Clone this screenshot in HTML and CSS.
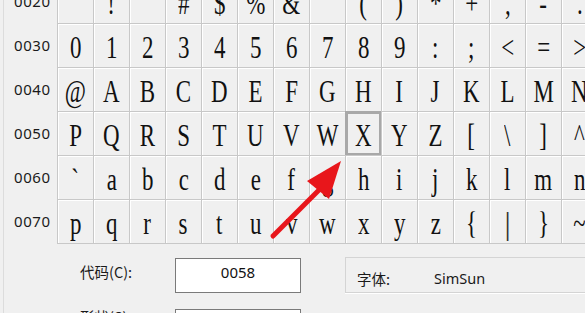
FILE: index.html
```html
<!DOCTYPE html>
<html lang="zh">
<head>
<meta charset="utf-8">
<link rel="stylesheet" href="styles.css">
</head>
<body>
<div class="window">
  <div class="grid">
    <div class="label">0020</div>
    <div class="cell"></div><div class="cell"><span class="g">!</span></div><div class="cell"><span class="g hi">"</span></div><div class="cell"><span class="g">#</span></div><div class="cell"><span class="g">$</span></div><div class="cell"><span class="g">%</span></div><div class="cell"><span class="g">&amp;</span></div><div class="cell"><span class="g hi">'</span></div><div class="cell"><span class="g">(</span></div><div class="cell"><span class="g">)</span></div><div class="cell"><span class="g">*</span></div><div class="cell"><span class="g">+</span></div><div class="cell"><span class="g">,</span></div><div class="cell"><span class="g">-</span></div><div class="cell"><span class="g">.</span></div><div class="cell"><span class="g">/</span></div>
    <div class="label">0030</div>
    <div class="cell"><span class="g">0</span></div><div class="cell"><span class="g">1</span></div><div class="cell"><span class="g">2</span></div><div class="cell"><span class="g">3</span></div><div class="cell"><span class="g">4</span></div><div class="cell"><span class="g">5</span></div><div class="cell"><span class="g">6</span></div><div class="cell"><span class="g">7</span></div><div class="cell"><span class="g">8</span></div><div class="cell"><span class="g">9</span></div><div class="cell"><span class="g">:</span></div><div class="cell"><span class="g">;</span></div><div class="cell"><span class="g">&lt;</span></div><div class="cell"><span class="g">=</span></div><div class="cell"><span class="g">&gt;</span></div><div class="cell"><span class="g">?</span></div>
    <div class="label">0040</div>
    <div class="cell"><span class="g">@</span></div><div class="cell"><span class="g">A</span></div><div class="cell"><span class="g">B</span></div><div class="cell"><span class="g">C</span></div><div class="cell"><span class="g">D</span></div><div class="cell"><span class="g">E</span></div><div class="cell"><span class="g">F</span></div><div class="cell"><span class="g">G</span></div><div class="cell"><span class="g">H</span></div><div class="cell"><span class="g">I</span></div><div class="cell"><span class="g">J</span></div><div class="cell"><span class="g">K</span></div><div class="cell"><span class="g">L</span></div><div class="cell"><span class="g">M</span></div><div class="cell"><span class="g">N</span></div><div class="cell"><span class="g">O</span></div>
    <div class="label">0050</div>
    <div class="cell"><span class="g">P</span></div><div class="cell"><span class="g">Q</span></div><div class="cell"><span class="g">R</span></div><div class="cell"><span class="g">S</span></div><div class="cell"><span class="g">T</span></div><div class="cell"><span class="g">U</span></div><div class="cell"><span class="g">V</span></div><div class="cell"><span class="g">W</span></div><div class="cell selected"><span class="g">X</span></div><div class="cell"><span class="g">Y</span></div><div class="cell"><span class="g">Z</span></div><div class="cell"><span class="g">[</span></div><div class="cell"><span class="g">\</span></div><div class="cell"><span class="g">]</span></div><div class="cell"><span class="g">^</span></div><div class="cell"><span class="g">_</span></div>
    <div class="label">0060</div>
    <div class="cell"><span class="g">`</span></div><div class="cell"><span class="g">a</span></div><div class="cell"><span class="g">b</span></div><div class="cell"><span class="g">c</span></div><div class="cell"><span class="g">d</span></div><div class="cell"><span class="g">e</span></div><div class="cell"><span class="g">f</span></div><div class="cell"><span class="g">g</span></div><div class="cell"><span class="g">h</span></div><div class="cell"><span class="g">i</span></div><div class="cell"><span class="g">j</span></div><div class="cell"><span class="g">k</span></div><div class="cell"><span class="g">l</span></div><div class="cell"><span class="g">m</span></div><div class="cell"><span class="g">n</span></div><div class="cell"><span class="g">o</span></div>
    <div class="label">0070</div>
    <div class="cell"><span class="g">p</span></div><div class="cell"><span class="g">q</span></div><div class="cell"><span class="g">r</span></div><div class="cell"><span class="g">s</span></div><div class="cell"><span class="g">t</span></div><div class="cell"><span class="g">u</span></div><div class="cell"><span class="g">v</span></div><div class="cell"><span class="g">w</span></div><div class="cell"><span class="g">x</span></div><div class="cell"><span class="g">y</span></div><div class="cell"><span class="g">z</span></div><div class="cell"><span class="g">{</span></div><div class="cell"><span class="g bar">|</span></div><div class="cell"><span class="g">}</span></div><div class="cell"><span class="g">~</span></div><div class="cell"></div>
  </div>
  <div class="bottom">
    <div class="fields">
      <div class="field">
        <span class="field-label">代码(C):</span>
        <div class="box">0058</div>
      </div>
      <div class="field">
        <span class="field-label up">形状(S):</span>
        <div class="box"></div>
      </div>
    </div>
    <div class="group">
      <span class="group-label">字体:</span>
      <span class="group-value">SimSun</span>
    </div>
  </div>
  <svg class="arrow" width="585" height="313" viewBox="0 0 585 313">
    <line x1="273" y1="236" x2="320" y2="189" stroke="#e8161b" stroke-width="5" stroke-linecap="round"/>
    <polygon points="341,161 307,181 329,199" fill="#e8161b"/>
  </svg>
</div>
</body>
</html>
```
FILE: styles.css
```css
html, body {
  margin: 0;
  padding: 0;
  background: #f0f0f0;
}
.window {
  position: relative;
  width: 585px;
  height: 313px;
  overflow: hidden;
  background: #f0f0f0;
  border-left: 1px solid #dcdcdc;
  margin-left: 3px;
  box-sizing: border-box;
}
.grid {
  display: grid;
  grid-template-columns: 53px repeat(16, 36px);
  grid-auto-rows: 44px;
  margin-top: -21px;
  width: max-content;
}
.label {
  font-family: "Noto Sans", "Liberation Sans", sans-serif;
  font-size: 15px;
  letter-spacing: 0.6px;
  color: #1a1a1a;
  line-height: 44px;
  padding-left: 10px;
}
.cell {
  box-sizing: border-box;
  border-left: 1px solid #c8c8c8;
  border-top: 1px solid #c8c8c8;
  box-shadow: inset 1px 1px 0 #ffffff;
  background: #f0f0f0;
  font-family: "Liberation Serif", "DejaVu Serif", serif;
  font-size: 31px;
  line-height: 44px;
  text-align: center;
  color: #111;
  overflow: hidden;
}
.g {
  display: inline-block;
  transform: scaleX(0.74);
  position: relative;
  top: 2px;
}
.g.hi {
  top: -9px;
}
.g.bar {
  transform: none;
  font-weight: 300;
  color: #333;
}
.cell.selected {
  box-shadow: inset 0 0 0 2px #a8a8a8;
  border-color: #a8a8a8;
}
.bottom {
  display: flex;
  align-items: flex-start;
  border-top: 1px solid #c8c8c8;
  margin-left: 53px;
}
.fields {
  display: flex;
  flex-direction: column;
  gap: 13px;
  padding-top: 14px;
  width: 300px;
  flex-shrink: 0;
  margin-left: -53px;
  padding-left: 76px;
  box-sizing: border-box;
}
.field {
  display: flex;
  align-items: center;
}
.field-label {
  width: 95px;
  flex-shrink: 0;
  padding-bottom: 8px;
  font-family: "Noto Sans CJK SC", "Noto Sans", sans-serif;
  font-size: 14.5px;
  color: #1a1a1a;
}
.field-label.up {
  padding-bottom: 20px;
}
.box {
  box-sizing: border-box;
  width: 126px;
  flex-shrink: 0;
  height: 35px;
  background: #ffffff;
  border: 1px solid #7a7a7a;
  font-family: "Noto Sans", "Liberation Sans", sans-serif;
  font-size: 15px;
  text-align: center;
  line-height: 26px;
  color: #111;
}
.group {
  margin-left: 41px;
  margin-top: 13px;
  flex: 1;
  height: 36px;
  box-sizing: border-box;
  border: 1px solid #d4d4d4;
  border-right: none;
  box-shadow: 0 1px 0 #ffffff;
  display: flex;
  align-items: center;
  padding-left: 11px;
  padding-top: 6px;
  font-family: "Noto Sans CJK SC", "Noto Sans", sans-serif;
  font-size: 14.5px;
  color: #1a1a1a;
}
.group-label {
  width: 77px;
}
.group-value {
  font-family: "Noto Sans", "Liberation Sans", sans-serif;
  font-size: 14.5px;
}
.arrow {
  position: absolute;
  left: -4px;
  top: 0;
  pointer-events: none;
}
```
